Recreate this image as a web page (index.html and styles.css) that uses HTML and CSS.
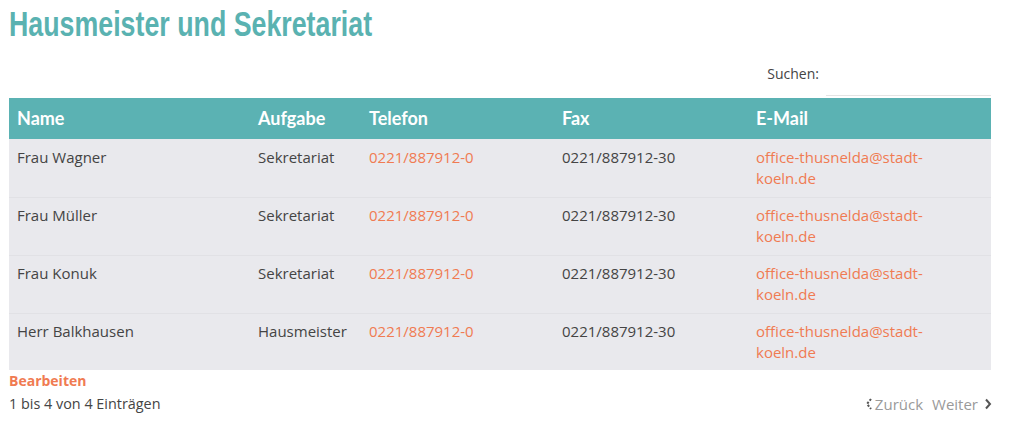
FILE: index.html
```html
<!DOCTYPE html>
<html lang="de">
<head>
<meta charset="utf-8">
<title>Hausmeister und Sekretariat</title>
<link rel="stylesheet" href="styles.css">
</head>
<body>
<div class="page">
  <h1 class="title"><span class="title-text">Hausmeister und Sekretariat</span></h1>
  <div class="search">
    <label class="search-label">Suchen:</label>
    <input class="search-input" type="search">
  </div>
  <table class="staff">
    <colgroup>
      <col class="c-name"><col class="c-task"><col class="c-tel"><col class="c-fax"><col class="c-mail">
    </colgroup>
    <thead>
      <tr><th>Name</th><th>Aufgabe</th><th>Telefon</th><th>Fax</th><th>E-Mail</th></tr>
    </thead>
    <tbody>
      <tr><td>Frau Wagner</td><td>Sekretariat</td><td><a class="link">0221/887912-0</a></td><td>0221/887912-30</td><td class="mail"><a class="link">office-thusnelda@stadt-koeln.de</a></td></tr>
      <tr><td>Frau Müller</td><td>Sekretariat</td><td><a class="link">0221/887912-0</a></td><td>0221/887912-30</td><td class="mail"><a class="link">office-thusnelda@stadt-koeln.de</a></td></tr>
      <tr><td>Frau Konuk</td><td>Sekretariat</td><td><a class="link">0221/887912-0</a></td><td>0221/887912-30</td><td class="mail"><a class="link">office-thusnelda@stadt-koeln.de</a></td></tr>
      <tr><td>Herr Balkhausen</td><td>Hausmeister</td><td><a class="link">0221/887912-0</a></td><td>0221/887912-30</td><td class="mail"><a class="link">office-thusnelda@stadt-koeln.de</a></td></tr>
    </tbody>
  </table>
  <a class="edit">Bearbeiten</a>
  <div class="footer">
    <span class="info">1 bis 4 von 4 Einträgen</span>
    <div class="pager">
      <span class="pg prev"><svg class="chev" width="8" height="12" viewBox="0 0 8 12"><path d="M6 1 L2 6 L6 11" fill="none" stroke="#555" stroke-width="2" stroke-dasharray="2.2 1.6"/></svg>Zurück</span>
      <span class="pg next">Weiter<svg class="chev" width="8" height="12" viewBox="0 0 8 12"><path d="M2 1.5 L6 6 L2 10.5" fill="none" stroke="#555" stroke-width="2"/></svg></span>
    </div>
  </div>
</div>
</body>
</html>
```

FILE: styles.css
```css
* { box-sizing: border-box; }
html, body { margin: 0; padding: 0; background: #fff; }
body {
  font-family: "Open Sans", "Liberation Sans", sans-serif;
  font-size: 14px;
  color: #444;
}
.page {
  width: 982px;
  margin-left: 9px;
  padding-top: 5px;
}
.title {
  margin: 0;
  font-family: "Liberation Sans", "Arial", sans-serif;
  font-weight: 700;
  font-size: 35px;
  line-height: 38px;
  color: #5ab2b1;
  white-space: nowrap;
}
.title-text {
  display: inline-block;
  transform: scaleX(0.765);
  transform-origin: left center;
}
.search {
  display: flex;
  justify-content: flex-end;
  align-items: flex-start;
  margin-top: 22px;
  height: 31px;
}
.search-label {
  color: #444;
  font-size: 14px;
  line-height: 20px;
  margin-top: -1px;
  margin-right: 7px;
}
.search-input {
  width: 165px;
  height: 31px;
  border: none;
  border-bottom: 1px solid #e4e4e4;
  outline: none;
  background: #fff;
  font: inherit;
}
.staff {
  width: 982px;
  table-layout: fixed;
  border-collapse: collapse;
  margin-top: 2px;
}
.c-name { width: 241px; }
.c-task { width: 111px; }
.c-tel { width: 193px; }
.c-fax { width: 194px; }
.c-mail { width: 243px; }
.staff th {
  background: #5bb2b3;
  color: #fff;
  text-align: left;
  font-family: "Lato", "Noto Sans", sans-serif;
  font-weight: 700;
  font-size: 18px;
  line-height: 21px;
  padding: 10px 8px 10px 8px;
  height: 41px;
}
.staff td {
  background: #e9e9ed;
  vertical-align: top;
  font-size: 15px;
  line-height: 21px;
  padding: 8px 8px 7px 8px;
  height: 58px;
  box-shadow: inset 0 1px 0 #e1e1e5;
  color: #444;
}
.staff td.mail { padding-right: 20px; }
.staff tbody tr:first-child td { box-shadow: none; }
.staff tbody tr:last-child td { height: 57px; }
.link {
  color: #f07b52;
  text-decoration: none;
}
.edit {
  display: block;
  margin-top: 1px;
  color: #f07b52;
  font-weight: 700;
  font-size: 14px;
  line-height: 20px;
}
.footer {
  display: flex;
  justify-content: space-between;
  align-items: center;
  margin-top: 2px;
  line-height: 22px;
}
.info { font-size: 14.4px; }
.pager {
  display: flex;
  gap: 9px;
  color: #9a9a9a;
  font-size: 15px;
  margin-right: -1px;
}
.pg { display: inline-flex; align-items: center; gap: 2px; }
.pg.next { gap: 6px; }
.chev { display: block; }
```
